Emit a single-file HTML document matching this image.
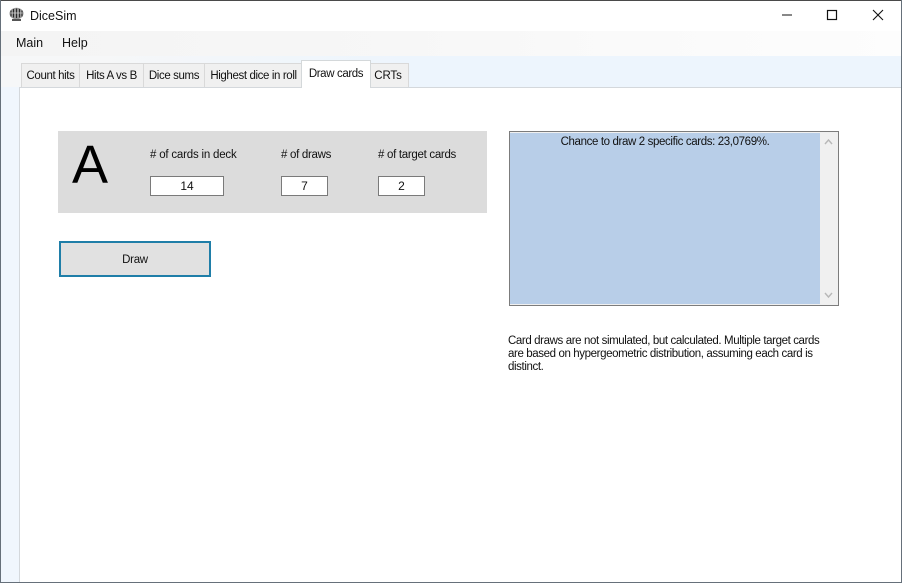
<!DOCTYPE html>
<html>
<head>
<meta charset="utf-8">
<style>
html,body{margin:0;padding:0;}
body{width:902px;height:583px;position:relative;overflow:hidden;background:#fff;font-family:"Liberation Sans",sans-serif;color:#111;}
.a{position:absolute;white-space:nowrap;}
.l{font-size:11.5px;line-height:14px;letter-spacing:-0.3px;}
.tab{position:absolute;top:63px;height:24px;background:#f0f0f0;border:1px solid #d9d9d9;border-bottom:none;box-sizing:border-box;font-size:11.5px;line-height:25px;text-align:center;letter-spacing:-0.38px;color:#111;white-space:nowrap;}
.inp{position:absolute;top:176px;height:20px;box-sizing:border-box;background:#fff;border:1px solid #7a7a7a;font-size:12px;line-height:18px;text-align:center;}
</style>
</head>
<body>
<!-- title bar -->
<svg class="a" style="left:8px;top:7px;" width="17" height="16" viewBox="0 0 17 16">
<ellipse cx="8.500" cy="6.500" rx="7" ry="5.800" fill="#9a9a9a"/>
<path d="M3 3.500V9.500M5.500 2V10.500M8.500 1.500V11M11.500 2V10.500M14 3.500V9.500" stroke="#2a2a2a" stroke-width="1.100" fill="none"/>
<path d="M2.500 6H14.500" stroke="#ddd" stroke-width="0.700"/>
<path d="M4 13H13" stroke="#555" stroke-width="2"/>
</svg>
<div class="a" style="left:30px;top:9px;font-size:12.5px;line-height:15px;color:#111;">DiceSim</div>
<svg class="a" style="left:780px;top:0;" width="122" height="31" viewBox="0 0 122 31">
<path d="M2 15H12" stroke="#111" stroke-width="1" fill="none"/>
<rect x="47.500" y="10.500" width="9" height="9" stroke="#111" stroke-width="1.200" fill="none"/>
<path d="M93 10L103 20M103 10L93 20" stroke="#111" stroke-width="1.100" fill="none"/>
</svg>

<!-- menu bar -->
<div class="a" style="left:1px;top:31px;width:900px;height:25px;background:linear-gradient(90deg,#f4f4f4 0%,#f7f7f7 45%,#fafafa 70%,#fdfdfd 100%);"></div>
<div class="a" style="left:16px;top:36px;font-size:12.5px;line-height:15px;color:#111;">Main</div>
<div class="a" style="left:62px;top:36px;font-size:12.5px;line-height:15px;color:#111;">Help</div>

<!-- tab strip background -->
<div class="a" style="left:1px;top:56px;width:900px;height:31px;background:linear-gradient(90deg,#f6f7f8 0%,#f6f7f8 10%,#edf5fd 45%,#edf5fd 100%);"></div>
<div class="a" style="left:1px;top:87px;width:18px;height:495px;background:#f0f6fd;"></div>
<div class="a" style="left:19px;top:87px;width:1px;height:495px;background:#d4d8dc;"></div>
<div class="a" style="left:19px;top:87px;width:882px;height:1px;background:#d4d8dc;"></div>

<!-- tabs -->
<div class="tab" style="left:21px;width:59px;">Count hits</div>
<div class="tab" style="left:79px;width:65px;">Hits A vs B</div>
<div class="tab" style="left:143px;width:62px;">Dice sums</div>
<div class="tab" style="left:204px;width:99px;">Highest dice in roll</div>
<div class="tab" style="left:369px;width:40px;padding-right:2px;letter-spacing:-0.1px;">CRTs</div>
<div class="tab" style="left:301px;top:60px;height:28px;width:70px;background:#fff;border-color:#d4d8da;line-height:26px;z-index:2;">Draw cards</div>

<!-- group panel -->
<div class="a" style="left:58px;top:131px;width:429px;height:82px;background:#dcdcdc;"></div>
<div class="a" style="left:72px;top:137px;font-size:54px;line-height:56px;color:#000;">A</div>
<div class="a l" style="left:150px;top:148px;letter-spacing:-0.2px;"># of cards in deck</div>
<div class="a l" style="left:281px;top:148px;"># of draws</div>
<div class="a l" style="left:378px;top:148px;"># of target cards</div>
<div class="inp" style="left:150px;width:74px;">14</div>
<div class="inp" style="left:281px;width:47px;">7</div>
<div class="inp" style="left:378px;width:47px;">2</div>

<!-- button -->
<div class="a" style="left:59px;top:241px;width:152px;height:36px;box-sizing:border-box;background:#e1e1e1;border:2px solid #1f7ea8;font-size:11.5px;line-height:34px;text-align:center;letter-spacing:-0.3px;">Draw</div>

<!-- text area -->
<div class="a" style="left:509px;top:131px;width:330px;height:175px;box-sizing:border-box;background:#f0f0f0;border:1px solid #7c7c7c;"></div>
<div class="a" style="left:510px;top:133px;width:310px;height:171px;background:#b8cee8;"></div>
<div class="a l" style="left:510px;top:135px;width:310px;text-align:center;letter-spacing:-0.37px;">Chance to draw 2 specific cards: 23,0769%.</div>
<svg class="a" style="left:820px;top:133px;" width="17" height="171" viewBox="0 0 17 171">
<path d="M5 11L8.500 7L12 11" stroke="#b8b8b8" stroke-width="1.400" fill="none"/>
<path d="M5 160L8.500 164L12 160" stroke="#b8b8b8" stroke-width="1.400" fill="none"/>
</svg>

<!-- description -->
<div class="a l" style="left:508px;top:335px;line-height:13px;letter-spacing:-0.39px;">Card draws are not simulated, but calculated. Multiple target cards<br>are based on hypergeometric distribution, assuming each card is<br>distinct.</div>

<!-- window frame -->
<div class="a" style="left:0;top:0;width:902px;height:1px;background:#4a4a4a;"></div>
<div class="a" style="left:0;top:0;width:1px;height:583px;background:#66707a;"></div>
<div class="a" style="left:901px;top:0;width:1px;height:583px;background:#66707a;"></div>
<div class="a" style="left:0;top:582px;width:902px;height:1px;background:#66707a;"></div>
</body>
</html>
